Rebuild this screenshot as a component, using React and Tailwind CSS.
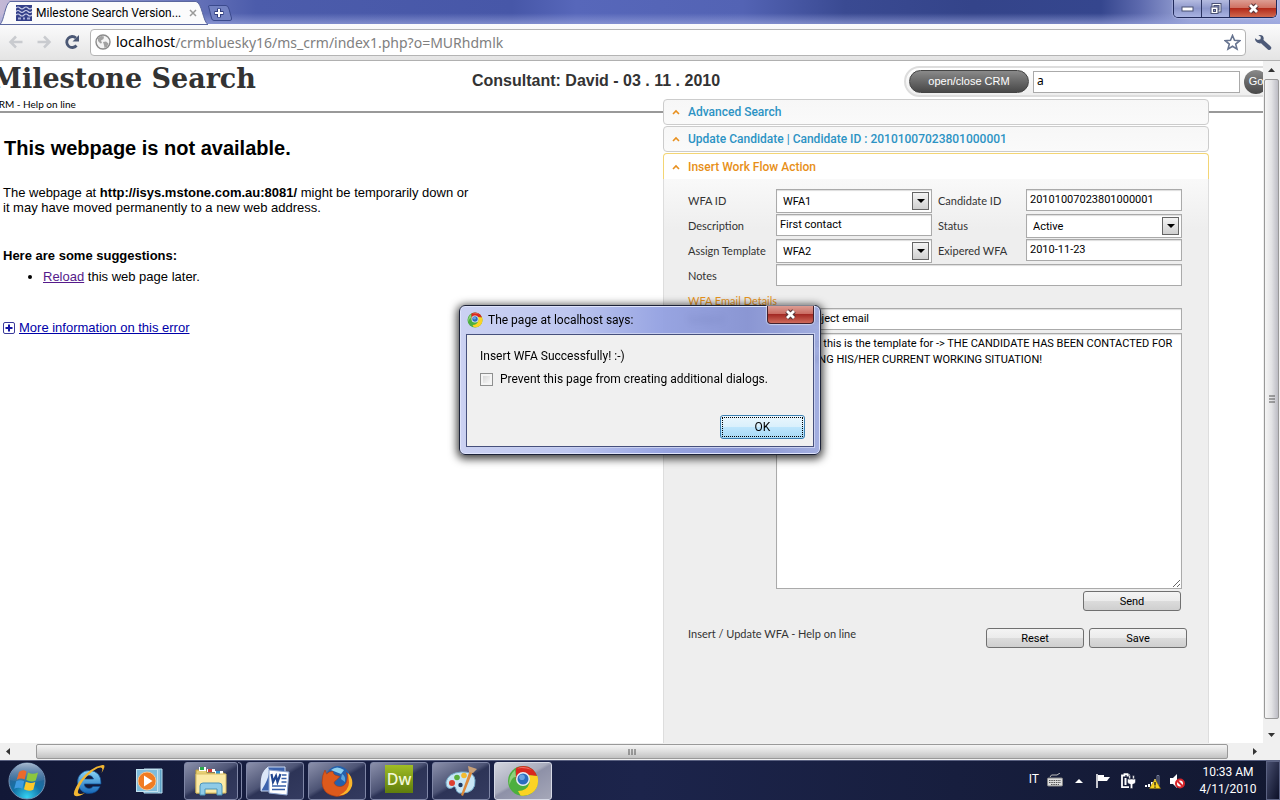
import React, { useState } from "react";

function ChromeLogo({ className }) {
  return (
    <svg viewBox="0 0 32 32" className={className} aria-hidden="true">
      <circle cx="16" cy="16" r="15" fill="#4caf3e" />
      <path d="M9 3Q18-1.500 26 4.500 29 7.500 30 11.500L17 9Q9 9 8.500 16Z" fill="#d9281f" />
      <path d="M30.500 11Q33 22 25 28 20 31.500 13.500 30.500L11 26Q20 26 22.500 18 24 13 20.500 10Z" fill="#fbd324" />
      <path d="M10 3.500Q18 0 25 5q-8-3-15-1.500Z" fill="#f58a7c" opacity=".8" />
      <path d="M8 5Q1 11 2.500 20 5 11 9 12Z" fill="#9ed98a" opacity=".8" />
      <circle cx="16" cy="14" r="7" fill="#e9eef5" />
      <circle cx="16" cy="14" r="5.500" fill="#2a6cc0" />
      <circle cx="15" cy="12.300" r="2.800" fill="#86b9ee" opacity=".7" />
    </svg>
  );
}

function CloseGlyph() {
  return (
    <svg width="13" height="11" viewBox="0 0 13 11" aria-hidden="true">
      <path d="M3 2l7 7M10 2l-7 7" stroke="#5a3438" strokeWidth="5" />
      <path d="M3 2l7 7M10 2l-7 7" stroke="#fff" strokeWidth="2.800" />
    </svg>
  );
}

function WindowButtons() {
  const base = "flex h-full w-7 items-center justify-center border-r border-[#2c3562] bg-linear-to-b from-[#b4bbe0] via-[#8d97cb] to-[#a9b3e2]";
  return (
    <div className="flex h-[18px] self-start overflow-hidden rounded-b-[5px] border border-t-0 border-[#20295a] shadow-[0_0_2px_#dfe4ff]">
      <button aria-label="Minimize" className={base}>
        <svg width="13" height="6"><rect x="1" y="1" width="11" height="4" fill="#fff" stroke="#4a5275" /></svg>
      </button>
      <button aria-label="Restore" className={base}>
        <svg width="13" height="12" fill="none">
          <rect x="4" y="1.500" width="7" height="6.500" stroke="#4a5275" strokeWidth="3" />
          <rect x="4" y="1.500" width="7" height="6.500" stroke="#fff" />
          <rect x="2" y="4" width="7" height="6.500" fill="#fff" stroke="#4a5275" />
          <rect x="4.500" y="6.500" width="2" height="2" fill="#8d97cb" stroke="#4a5275" />
        </svg>
      </button>
      <button aria-label="Close" className="flex h-full w-[46px] items-center justify-center bg-[linear-gradient(#dd9d93,#cf6f60_48%,#b32a1a_50%,#d0684e)]">
        <CloseGlyph />
      </button>
    </div>
  );
}

function TitleBar() {
  return (
    <header className="flex h-6 shrink-0 bg-[linear-gradient(180deg,#98a3dc00_55%,#98a3dcb0),linear-gradient(90deg,#c4b9d6_0%,#8a92cc_8%,#4c5cab_20%,#4757a8_40%,#5767ba_45%,#5363b4_58%,#3a4a92_66%,#34448a_76%,#35468e_86%,#5c69ad_89%,#9da7d8_93%,#a9b3e4_100%)]">
      <div className="relative h-6 w-[208px]">
        <svg className="absolute inset-0" width="208" height="25" viewBox="0 0 208 25" aria-hidden="true">
          <path d="M0 24.500C4 21 5 4 10 1.500H196C202 2.500 203 22 208 24.500Z" fill="#fbfbfc" stroke="#5b679e" />
        </svg>
        <div className="relative flex h-full items-center gap-1 pt-0.5 pl-4">
          <svg width="16" height="16" className="shrink-0" aria-hidden="true">
            <rect width="16" height="16" fill="#34408a" />
            <path d="M0 3q2-2 4 0t4 0t4 0t4 0M0 6.500q2-2 4 0t4 0t4 0t4 0M0 10q2-2 4 0t4 0t4 0t4 0" fill="none" stroke="#c9cde8" strokeWidth="1.100" />
            <path d="M2 13.500h3M7 13.500h2M11 13.500h3" stroke="#aab0d8" strokeWidth="2" />
          </svg>
          <span className="flex-1 text-xs whitespace-nowrap text-black">Milestone Search Version...</span>
          <button aria-label="Close tab" className="mr-3 flex size-4 shrink-0 items-center justify-center">
            <svg width="8" height="8"><path d="M1 1l6 6M7 1l-6 6" stroke="#9a9a9a" strokeWidth="1.500" /></svg>
          </button>
        </div>
      </div>
      <button aria-label="New tab" className="mt-[5px] h-4 w-6">
        <svg width="24" height="16" viewBox="0 0 24 16">
          <path d="M.5 1Q1 .5 2 .5H18Q20 .5 21 4L23.500 13Q24 15.500 22 15.500H6Q4 15.500 3.500 13Z" fill="#7382c2" stroke="#3b4a8d" />
          <path d="M11 3.500v9M6.500 8h9" stroke="#2f3c7b" strokeWidth="4" />
          <path d="M11 4v8M7 8h8" stroke="#fff" strokeWidth="2" />
        </svg>
      </button>
      <div className="ml-auto pr-[3px]"><WindowButtons /></div>
    </header>
  );
}

function Toolbar() {
  return (
    <nav className="flex h-[37px] shrink-0 items-center border-b border-[#b0b0b0] bg-linear-to-b from-[#fbfbfc] to-[#e4e4e4] px-2">
      <button aria-label="Back" className="mr-3 size-4">
        <svg width="16" height="16"><path d="M14.500 8H3M8 2.500L2.500 8L8 13.500" fill="none" stroke="#c9cbcf" strokeWidth="2.500" /></svg>
      </button>
      <button aria-label="Forward" className="mr-3 size-4">
        <svg width="16" height="16"><path d="M1.500 8H13M8 2.500L13.500 8L8 13.500" fill="none" stroke="#c9cbcf" strokeWidth="2.500" /></svg>
      </button>
      <button aria-label="Reload" className="mr-2.5 size-4">
        <svg width="16" height="16"><path d="M12.500 11.500A5.500 5.500 0 1 1 12 4" fill="none" stroke="#4b5875" strokeWidth="2.800" /><path d="M15 1v6.500H8.500Z" fill="#4b5875" /></svg>
      </button>
      <div className="flex h-[27px] flex-1 items-center rounded border border-[#b4b4b4] bg-white pr-1 pl-1 font-['Noto_Sans'] text-sm">
        <svg width="16" height="16" viewBox="0 0 16 16" className="mr-[5px] shrink-0" aria-hidden="true">
          <circle cx="8" cy="8" r="7" fill="#f4f4f4" stroke="#8b8b8b" strokeWidth="1.400" />
          <path d="M3 4l3-2 3 .5-.5 2.500L6 6.500 7 9 5.500 9.500 3 7ZM8 8l3-.5 2.500 2L12 13l-2.500 1-.5-3Z" fill="#a2a2a2" />
        </svg>
        <label htmlFor="url" className="text-black">localhost</label>
        <input id="url" defaultValue="/crmbluesky16/ms_crm/index1.php?o=MURhdmlk" className="h-full min-w-0 flex-1 bg-transparent text-[#808080] outline-none" />
        <button aria-label="Bookmark">
          <svg width="17" height="17" viewBox="0 0 17 17"><path d="M8.500 1.500l2 4.800 5.200.4-4 3.400 1.300 5-4.500-2.800-4.500 2.800 1.300-5-4-3.400 5.200-.4Z" fill="#fff" stroke="#66738f" strokeWidth="1.600" /></svg>
        </button>
      </div>
      <button aria-label="Settings" className="ml-2">
        <svg width="18" height="17" viewBox="0 0 18 17"><path d="M9.500 6l7 6.200q1.500 1.500 .3 3t-3 .2L7 9.300Q3.500 9.800 1.800 7.300 .8 5.800 1 4.200L3.800 6 6.500 5.300 6.800 2.800 4.300 1.200Q7 .3 8.900 2 10.300 4 9.500 6Z" fill="#4d5a78" /></svg>
      </button>
    </nav>
  );
}

function PageHeader() {
  return (
    <header className="flex h-[52px] shrink-0 items-start border-b-2 border-[#999] whitespace-nowrap">
      <div className="-ml-2 w-[480px]">
        <h1 className="h-9 font-['DejaVu_Serif'] text-[27px] leading-9 font-bold text-[#333]">Milestone Search</h1>
        <p className="font-['Lato'] text-[10px] leading-[14px] text-black">CRM - Help on line</p>
      </div>
      <h2 className="pt-2 font-['Liberation_Sans'] text-base leading-6 font-bold text-[#333]">Consultant: David - 03 . 11 . 2010</h2>
      <form className="mt-[5px] -mr-[15px] ml-auto flex h-[31px] items-center gap-1 rounded-full border-2 border-[#ddd] bg-linear-to-b from-white to-[#eee] pr-2 pl-[3px] font-['Liberation_Sans']" onSubmit={(e) => e.preventDefault()}>
        <button type="button" className="h-[23px] w-[120px] rounded-full border border-[#444] bg-linear-to-b from-[#8a8a8a] to-[#484848] text-[11px] text-white">open/close CRM</button>
        <input aria-label="Search" defaultValue="a" className="h-[22px] w-[207px] border border-[#aaa] bg-white px-[3px] pb-0.5 font-['Noto_Sans'] text-xs text-black outline-none" />
        <button className="size-6 rounded-full bg-linear-to-b from-[#8a8a8a] to-[#484848] text-[11px] text-white">Go</button>
      </form>
    </header>
  );
}

function ErrorPage() {
  return (
    <section className="w-[480px] pt-[23px] pl-[3px] font-['Liberation_Sans'] text-[13px] leading-[15px] text-black">
      <h2 className="pl-px text-[20px] leading-6 font-bold">This webpage is not available.</h2>
      <p className="mt-[25px] w-[470px]">
        The webpage at <b>http://isys.mstone.com.au:8081/</b> might be temporarily down or it may have moved permanently to a new web address.
      </p>
      <h3 className="mt-[33px] font-bold">Here are some suggestions:</h3>
      <ul className="mt-1.5 list-disc pl-10">
        <li><a href="#reload" className="text-[#551a8b] underline">Reload</a> this web page later.</li>
      </ul>
      <p className="mt-9 flex items-center gap-1">
        <svg width="12" height="12" aria-hidden="true"><rect x=".5" y=".5" width="11" height="11" rx="1.500" fill="#fff" stroke="#3a3a9a" /><path d="M6 2.500v7M2.500 6h7" stroke="#1515a5" strokeWidth="2" /></svg>
        <a href="#more" className="text-[#0000a8] underline">More information on this error</a>
      </p>
    </section>
  );
}

function AccordionHead({ children, active }) {
  return (
    <h3>
      <button
        className={
          "flex h-[26px] w-full items-center gap-2 px-2 text-xs font-medium " +
          (active
            ? "rounded-t border border-b-0 border-[#f3d574] bg-white text-[#e78f18]"
            : "rounded border border-[#ccc] bg-linear-to-b from-[#f7f7f7] to-[#fafafa] text-[#2c93c4]")
        }
      >
        <svg width="8" height="8" aria-hidden="true"><path d="M1 6l3-3 3 3" fill="none" stroke="#e8901e" strokeWidth="1.600" /></svg>
        {children}
      </button>
    </h3>
  );
}

const field = "w-full border border-[#aaa] bg-white text-[11px] text-black outline-none shadow-[inset_0_1px_1px_#ddd]";

function TextField({ id, value, className = "" }) {
  return <input id={id} defaultValue={value} className={field + " h-[22px] px-[3px] " + className} />;
}

function SelectField({ id, value }) {
  return (
    <div className="relative">
      <select id={id} defaultValue={value} className={field + " h-6 appearance-none px-1.5"}>
        <option>{value}</option>
      </select>
      <span className="pointer-events-none absolute top-[3px] right-[3px] flex h-[18px] w-[17px] items-center justify-center border border-[#666] bg-linear-to-b from-[#f4f4f4] to-[#d0d0d0]">
        <svg width="8" height="4"><path d="M0 0h8L4 4Z" /></svg>
      </span>
    </div>
  );
}

function GrayButton({ children, type = "button" }) {
  return (
    <button type={type} className="h-5 w-[98px] rounded-[3px] border border-[#707070] bg-[linear-gradient(#f4f4f4,#ebebeb_50%,#dcdcdc_50%,#cfcfcf)] text-[11px] text-black">
      {children}
    </button>
  );
}

function WorkFlowForm() {
  return (
    <form
      onSubmit={(e) => e.preventDefault()}
      className="flex-1 border-x border-[#ddd] bg-[#eee] bg-[linear-gradient(#f9f9f9,#eee_50px)] pt-2.5 pr-[26px] pl-6 text-[11px] leading-6 text-[#333]"
    >
      <div className="grid auto-rows-[25px] grid-cols-[88px_1fr_94px_1fr]">
        <label htmlFor="wfa" className="font-['Lato']">WFA ID</label>
        <SelectField id="wfa" value="WFA1" />
        <label htmlFor="cid" className="pl-1.5 font-['Lato']">Candidate ID</label>
        <TextField id="cid" value="20101007023801000001" />
        <label htmlFor="desc" className="font-['Lato']">Description</label>
        <TextField id="desc" value="First contact" />
        <label htmlFor="status" className="pl-1.5 font-['Lato']">Status</label>
        <SelectField id="status" value="Active" />
        <label htmlFor="tpl" className="font-['Lato']">Assign Template</label>
        <SelectField id="tpl" value="WFA2" />
        <label htmlFor="exp" className="pl-1.5 font-['Lato']">Exipered WFA</label>
        <TextField id="exp" value="2010-11-23" />
        <label htmlFor="notes" className="font-['Lato']">Notes</label>
        <TextField id="notes" value="" className="col-span-3" />
      </div>
      <h4 className="h-[19px] font-['Lato'] text-[#e8951e]">WFA Email Details</h4>
      <div className="grid grid-cols-[88px_1fr] gap-y-[3px]">
        <label htmlFor="subject" className="font-['Lato'] leading-[22px]">Subject</label>
        <TextField id="subject" value="This subject email" />
        <label htmlFor="body" className="font-['Lato']">Message</label>
        <textarea
          id="body"
          className={field + " h-64 resize px-[3px] pt-0.5 leading-4"}
          defaultValue="Hi David this is the template for -> THE CANDIDATE HAS BEEN CONTACTED FOR CHECKING HIS/HER CURRENT WORKING SITUATION!"
        />
      </div>
      <div className="mt-0.5 flex justify-end pr-px leading-none"><GrayButton type="submit">Send</GrayButton></div>
      <div className="mt-[17px] -mr-[5px] flex gap-[5px] leading-none">
        <p className="mr-auto font-['Lato']">Insert / Update WFA - Help on line</p>
        <GrayButton type="reset">Reset</GrayButton>
        <GrayButton type="submit">Save</GrayButton>
      </div>
    </form>
  );
}

function VerticalScrollbar() {
  return (
    <div className="flex w-[17px] shrink-0 flex-col items-center bg-[#f0f0f0]">
      <svg width="17" height="18" aria-hidden="true"><path d="M5 11h7L8.500 7Z" fill="#333" /></svg>
      <div className="flex w-[15px] flex-1 items-center justify-center rounded-[2px] border border-[#999] bg-linear-to-r from-[#f5f5f5] via-[#e3e3e5] to-[#bcbcc4]">
        <svg width="8" height="8" aria-hidden="true"><path d="M1 1h6M1 4h6M1 7h6" stroke="#555" /></svg>
      </div>
      <svg width="17" height="24" aria-hidden="true"><path d="M5 14h7L8.500 18Z" fill="#333" /></svg>
    </div>
  );
}

function HorizontalScrollbar() {
  return (
    <div className="flex h-[17px] shrink-0 items-center bg-[#f0f0f0]">
      <svg width="36" height="17" aria-hidden="true"><path d="M10 5v7L6 8.500Z" fill="#333" /></svg>
      <div className="flex h-[15px] flex-1 items-center justify-center rounded-[2px] border border-[#999] bg-linear-to-b from-[#f5f5f5] via-[#dedede] to-[#c2c2c2]">
        <svg width="8" height="8" aria-hidden="true"><path d="M1 1v6M4 1v6M7 1v6" stroke="#555" /></svg>
      </div>
      <svg width="52" height="17" aria-hidden="true"><path d="M25 5v7l4-3.500Z" fill="#333" /></svg>
    </div>
  );
}

function AlertDialog({ onClose }) {
  return (
    <div className="pointer-events-none absolute inset-0 flex items-center justify-center">
      <div role="alertdialog" aria-label="The page at localhost says:" className="pointer-events-auto flex h-[150px] w-[362px] flex-col rounded-md border border-[#1c2238] bg-[linear-gradient(90deg,#c6cdf1e8,#b7c1eee8_30%,#8f9de0e8_55%,#808dd0e8_80%,#9aa7dde8)] px-1.5 pb-[7px] text-xs text-black shadow-[0_2px_9px_2px_rgba(0,0,0,0.75),inset_0_0_0_1px_#dfe4fb] backdrop-blur-[3px]">
        <div className="flex h-7 items-center gap-[5px] pl-px">
          <ChromeLogo className="size-4" />
          <span className="flex-1">The page at localhost says:</span>
          <button aria-label="Close dialog" onClick={onClose} className="flex h-[18px] w-[47px] items-center justify-center self-start rounded-b-[4px] border border-t-0 border-[#43222e] bg-[linear-gradient(#dd9d93,#c96a60_48%,#a32a24_50%,#cf6b5c)] shadow-[0_0_1px_1px_#ffffff80]">
            <CloseGlyph />
          </button>
        </div>
        <div className="flex flex-1 flex-col border border-[#46507c] bg-[#f0f0f0] pt-3 pr-2 pb-[7px] pl-[13px] shadow-[0_0_0_1px_#c9d0f0]">
          <p className="leading-[18px]">Insert WFA Successfully! :-)</p>
          <label className="mt-1.5 flex items-center gap-[7px]">
            <input type="checkbox" className="size-[13px] appearance-none border border-[#8e8f8f] bg-linear-to-br from-[#cfcfcf] to-white shadow-[inset_0_0_0_2px_#f4f4f4]" />
            Prevent this page from creating additional dialogs.
          </label>
          <button onClick={onClose} className="mt-auto h-6 w-[85px] self-end rounded-[3px] border border-[#3c7fb1] bg-[linear-gradient(#eaf6fd,#d9f0fc_50%,#bee6fd_50%,#a7d9f5)] p-px">
            <span className="flex h-full items-center justify-center border border-dotted border-black">OK</span>
          </button>
        </div>
      </div>
    </div>
  );
}

function TaskButton({ label, children, active, className = "w-[54px]" }) {
  return (
    <button
      aria-label={label}
      className={
        "flex h-[38px] items-center justify-center rounded-[3px] border " + className + " " +
        (active
          ? "border-[#d6d9e6] bg-[linear-gradient(150deg,#d3d5de,#a9acbd_45%,#8e91a8_50%,#a5a7b8)]"
          : "border-[#7f86a6] bg-[linear-gradient(150deg,#8b90ab,#4d5475_45%,#2d3457_52%,#343b60)]")
      }
    >
      {children}
    </button>
  );
}

function Taskbar() {
  return (
    <footer className="flex h-10 shrink-0 items-center border-t border-[#596080] bg-linear-to-r from-[#121837] via-[#1c244b] to-[#121831] text-white">
      <button aria-label="Start" className="ml-2 size-[38px]">
        <svg viewBox="0 0 38 38">
          <defs>
            <radialGradient id="orb" cx=".5" cy=".95" r=".9"><stop offset="0" stopColor="#35d3f2" /><stop offset=".45" stopColor="#1273a8" /><stop offset="1" stopColor="#38598a" /></radialGradient>
            <linearGradient id="orbTop" x2="0" y2="1"><stop stopColor="#c9d8e6" /><stop offset="1" stopColor="#5d7fa6" stopOpacity=".3" /></linearGradient>
          </defs>
          <circle cx="19" cy="19" r="18" fill="url(#orb)" stroke="#7593b5" />
          <path d="M2 18a17 17 0 0 1 34 0q-17 5-34 0Z" fill="url(#orbTop)" opacity=".75" />
          <path d="M11 10q4-3 7.500-.5l-1.800 8q-4-2-8 .2Z" fill="#ea6a2c" />
          <path d="M20 10.500q4.500 2.500 10 0l-2.200 8q-4.800 2-9.500-.5Z" fill="#8cc63e" />
          <path d="M8.200 19.300q4-2.200 8 0l-1.800 7.500q-4-2.200-8.200 0Z" fill="#3f9be0" />
          <path d="M17.800 19.800q4.700 2.200 9.500.2l-2 7.800q-4.800 2-9.300-.5Z" fill="#fdc829" />
        </svg>
      </button>
      <button aria-label="Internet Explorer" className="ml-[25px] size-9">
        <svg viewBox="0 0 36 36">
          <defs><linearGradient id="ie" x2="0" y2="1"><stop stopColor="#8bd6f8" /><stop offset="1" stopColor="#1567b8" /></linearGradient></defs>
          <path d="M18 7.500a11.500 11.500 0 0 0 0 23q8 0 11-7h-7q-1.500 2-4 2-4.500-.5-4.700-4.500H30Q30.500 8 18 7.500ZM13.500 16q1-3.500 4.500-3.500t4.500 3.500Z" fill="url(#ie)" stroke="#0d4d93" strokeWidth=".7" />
          <path d="M8 19Q1 30 3.500 32.500T14 30Q6 32.500 7 28 10 17 22 8 31 2 31.500 6.500L30.500 10Q36 1 31.500 2 19 4 8 19Z" fill="#f2b632" />
        </svg>
      </button>
      <button aria-label="Media Player" className="ml-[27px] size-8">
        <svg viewBox="0 0 32 32">
          <path d="M10 4h18v24H10Z" fill="#5da2c6" stroke="#b9dced" /><path d="M25 4v24" stroke="#d0eaf5" />
          <rect x="2.500" y="4.500" width="21" height="22" fill="#7fbcdb" stroke="#c3e3f0" />
          <circle cx="13" cy="16" r="9" fill="#f07c22" stroke="#f9c48e" /><path d="M10 10.500v11L18.500 16Z" fill="#fff" />
        </svg>
      </button>
      <div className="ml-[18px] flex gap-1">
        <div className="flex">
          <TaskButton label="Explorer">
            <svg width="34" height="32" viewBox="0 0 34 32">
              <path d="M2 5h10l1 3h17v20H2Z" fill="#e7cf74" stroke="#b99c3c" />
              <path d="M5 2h7v4H5Z" fill="#fff" /><path d="M6 2h4v3H6Z" fill="#27a84a" />
              <path d="M13 4h8v3h-8Z" fill="#fff" /><path d="M14 4h4v3h-4Z" fill="#cf3a36" />
              <path d="M21 6h8v3h-8Z" fill="#fff" /><path d="M22 6h4v3h-4Z" fill="#2c92cf" />
              <path d="M2 9h30v19H2Z" fill="#fbeaa6" stroke="#d9be64" />
              <path d="M6 30V21q0-3 3-3h16q3 0 3 3v9h-5v-6H11v6Z" fill="#8ecbe8" stroke="#4a94ba" />
            </svg>
          </TaskButton>
          <span className="h-[38px] w-1 rounded-r border border-l-0 border-[#7f86a6]" />
        </div>
        <TaskButton label="Word" className="w-[58px]">
          <svg width="32" height="32" viewBox="0 0 32 32">
            <path d="M9 2h17v24H2Q2 8 9 2Z" fill="#3d63ad" stroke="#c8d7f1" /><path d="M9 2q4 7-7 24Q0 7 9 2Z" fill="#dce7f8" />
            <path d="M10 5l20 2-2 23-18-2Z" fill="#fff" stroke="#8ba3cf" />
            <path d="M12.500 9l1.500 8 3-6 1.500 6 3-8" fill="none" stroke="#21468f" strokeWidth="2.200" />
            <path d="M23 10h4.500M22.500 13.500h5M22.500 17h5M13 21h14M13 24.500h13" stroke="#365fa8" strokeWidth="1.600" />
          </svg>
        </TaskButton>
        <TaskButton label="Firefox" className="w-[58px]">
          <svg width="32" height="32" viewBox="0 0 32 32">
            <circle cx="17" cy="13" r="12" fill="#2560ab" /><path d="M10 5q6-5 13 0l-3 4-5-2Z" fill="#8fd0ee" /><path d="M21 9q4 2 3 8l-4-3Z" fill="#5aa5dc" />
            <path d="M4 5l1.500 4Q8 6 12 6.500q0 2 2 3.500l5 1.500-4 4q-2 1-2 2.500 2 4 7 3.500 5-1 6-7 1-3-.5-7 5 4 5 10-1 13-14.500 14Q2 30 1 18 1 10 4 5Z" fill="#dd5a1c" stroke="#a63913" strokeWidth=".6" />
            <path d="M27 8q5.500 5 4 13-3 9-13 9.500 10-5 10-13Z" fill="#f9b62c" />
          </svg>
        </TaskButton>
        <TaskButton label="Dreamweaver" className="w-[58px]">
          <span className="mb-1 flex size-7 items-center justify-center bg-linear-to-b from-[#a0bd24] to-[#5f7d0d] font-['Noto_Sans'] text-base leading-none font-medium text-[#f2f8d8]">Dw</span>
        </TaskButton>
        <TaskButton label="Paint" className="w-[58px]">
          <svg width="32" height="32" viewBox="0 0 32 32">
            <path d="M16 7Q29 6 30 15 31 28 17 28 12 29 11 24 10 20 7 23 1 25 1 17 3 8 16 7Z" fill="#c8e6f5" stroke="#75abc9" />
            <circle cx="7" cy="18" r="3" fill="#dd4030" /><circle cx="12" cy="12.500" r="2.800" fill="#5aaf3c" /><circle cx="19" cy="10.500" r="2.800" fill="#f3bb30" /><circle cx="15.500" cy="20" r="2.200" fill="#1e3860" />
            <path d="M28 6L18 31l-2-1L25 5Z" fill="#dd8a3b" /><path d="M24 7l-1-6 9 3-4 4Z" fill="#c9a178" />
          </svg>
        </TaskButton>
        <TaskButton label="Chrome" active className="w-[58px]"><ChromeLogo className="size-8" /></TaskButton>
      </div>
      <div className="ml-auto flex items-center gap-2">
        <span className="pb-1 text-xs">IT</span>
        <svg width="16" height="16" viewBox="0 0 16 16" aria-hidden="true">
          <path d="M3 4q1-3 4-2t6-2" fill="none" stroke="#bbb" /><rect x=".5" y="5" width="15" height="8" rx="1" fill="#ddd" stroke="#888" />
          <path d="M2 7.500h12M2 9.500h12M4 11.500h8" stroke="#555" strokeDasharray="1.500 .8" />
        </svg>
        <svg width="16" height="8" aria-hidden="true"><path d="M4 6h8l-4-4Z" fill="#fff" /></svg>
        <svg width="17" height="16" viewBox="0 0 17 16" aria-hidden="true"><path d="M2 1v14" stroke="#fff" strokeWidth="1.500" /><path d="M3 2h6v2h6l-2 2.500 -1 1.500H9V8H3Z" fill="#fff" /></svg>
        <svg width="16" height="16" viewBox="0 0 16 16" aria-hidden="true">
          <path d="M10 2.500H7.500V1.200h-3v1.300H2v11.700h7" fill="none" stroke="#fff" strokeWidth="1.800" />
          <path d="M4.500 5h2v7h-2Z" fill="#fff" />
          <path d="M7.500 6h8v3q0 2-2.800 2.300v4.200h-2.400v-4.200Q7.500 11 7.500 9ZM8.800 2.500h1.700V6H8.800ZM12.600 2.500h1.700V6h-1.700Z" fill="#fff" stroke="#141a35" strokeWidth=".5" />
        </svg>
        <svg width="17" height="16" viewBox="0 0 17 16" aria-hidden="true">
          <path d="M1 12h2v2H1ZM4 11h2v3H4ZM7 9h2v5H7ZM10 6h2v8h-2Z" fill="#fff" /><path d="M13 2.500h2v10h-2Z" fill="none" stroke="#777f99" />
          <path d="M11 6l5.500 9.500h-11Z" fill="#f8d423" stroke="#8c730b" strokeWidth=".6" /><path d="M11 9v3.500M11 13.500v1.200" stroke="#222" strokeWidth="1.400" />
        </svg>
        <svg width="17" height="16" viewBox="0 0 17 16" aria-hidden="true">
          <path d="M1 5h3l4-4v14l-4-4H1Z" fill="#fff" /><circle cx="11" cy="10.500" r="4" fill="#fff" stroke="#d8242a" strokeWidth="2" /><path d="M8.500 8l5 5" stroke="#d8242a" strokeWidth="2" />
        </svg>
      </div>
      <div className="ml-1 flex w-[76px] flex-col items-center text-xs leading-[17px]">
        <time>10:33 AM</time>
        <time>4/11/2010</time>
      </div>
      <button aria-label="Show desktop" className="h-full w-3.5 border border-[#5b6282] bg-linear-to-br from-[#4a5070] to-[#0c1028]" />
    </footer>
  );
}

export default function App() {
  const [open, setOpen] = useState(true);
  return (
    <div className="flex h-screen flex-col overflow-hidden bg-white font-['Roboto',sans-serif]">
      <div className="relative flex min-h-0 flex-1 flex-col">
        <TitleBar />
        <Toolbar />
        <div className="flex min-h-0 flex-1">
          <div className="flex min-w-0 flex-1 flex-col overflow-hidden">
            <PageHeader />
            <main className="flex min-h-0 flex-1">
              <ErrorPage />
              <section className="z-10 -mt-3.5 mr-[54px] ml-auto flex w-[546px] flex-col gap-px bg-white">
                <AccordionHead>Advanced Search</AccordionHead>
                <AccordionHead>Update Candidate | Candidate ID : 20101007023801000001</AccordionHead>
                <div className="flex min-h-0 flex-1 flex-col">
                  <AccordionHead active>Insert Work Flow Action</AccordionHead>
                  <WorkFlowForm />
                </div>
              </section>
            </main>
          </div>
          <VerticalScrollbar />
        </div>
        <HorizontalScrollbar />
        {open && <div className="z-20"><AlertDialog onClose={() => setOpen(false)} /></div>}
      </div>
      <Taskbar />
    </div>
  );
}
